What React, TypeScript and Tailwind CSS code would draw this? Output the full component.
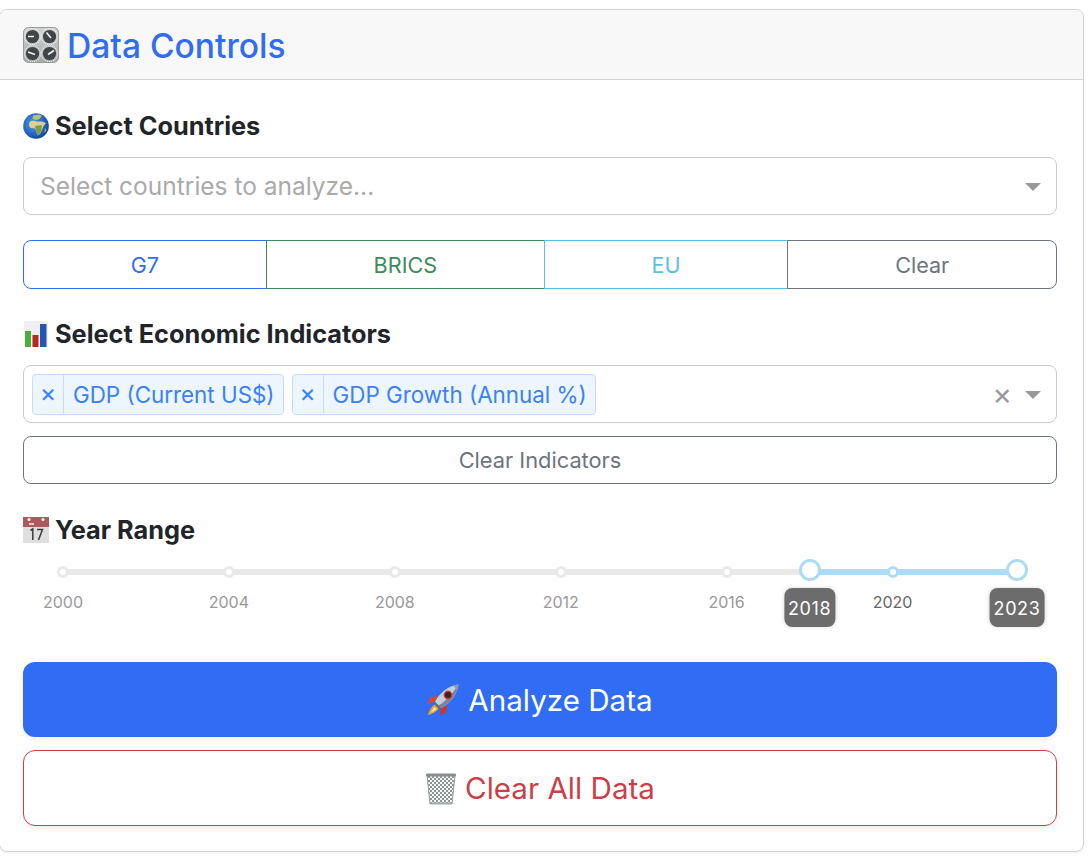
import React from "react";

const font = { fontFamily: "Inter, 'Liberation Sans', sans-serif" };

const KnobsIcon = () => (
  <svg viewBox="0 0 36 36" className="w-[36px] h-[36px] shrink-0">
    <defs>
      <linearGradient id="panel" x1="0" y1="0" x2="0" y2="1">
        <stop offset="0" stopColor="#d2d3d3" />
        <stop offset="1" stopColor="#a8aaaa" />
      </linearGradient>
    </defs>
    <rect x="0.5" y="0.5" width="35" height="35" rx="5" fill="url(#panel)" stroke="#9a9c9c" />
    {[
      [9.5, 9.5, 5, 9.5, 11, 9.5],
      [26.5, 9.5, 23.5, 5.5, 28, 11],
      [9.5, 26.5, 5, 25, 12, 27.5],
      [26.5, 26.5, 31, 23.5, 25, 27.5],
    ].map(([cx, cy, x1, y1, x2, y2], i) => (
      <g key={i}>
        <circle cx={cx} cy={cy} r="8" fill="none" stroke="#efefef" strokeWidth="1.2" strokeDasharray="1 1" />
        <circle cx={cx} cy={cy} r="6.6" fill="#41454a" />
        <line x1={x1} y1={y1} x2={x2} y2={y2} stroke="#f4f4f4" strokeWidth="1.6" />
      </g>
    ))}
  </svg>
);

const GlobeIcon = () => (
  <svg viewBox="0 0 26 26" className="w-[26px] h-[26px] shrink-0">
    <defs>
      <radialGradient id="sea" cx="0.4" cy="0.4" r="0.65">
        <stop offset="0" stopColor="#4f9de6" />
        <stop offset="0.7" stopColor="#1f62c0" />
        <stop offset="1" stopColor="#123f8e" />
      </radialGradient>
    </defs>
    <circle cx="13" cy="13" r="12.8" fill="url(#sea)" />
    <path d="M10 2.5 L16 1.5 L19 3 L16.5 6 L13 7 L9.5 6 Z" fill="#b7c07a" />
    <path d="M6.5 9 C8.5 7.5 11.5 7.5 13.5 8.5 L18.5 8.5 L23 10 L20.5 13 L19 17 L17 21 L14.5 22.5 L13 18 L12 15.5 L8 15 C6 14 5.5 11 6.5 9Z" fill="#ddcf8e" />
    <path d="M12 13 L19 12 L18.5 17 L16.5 21 L14.5 22.5 L13 18 Z" fill="#7d9c48" />
    <path d="M21.5 17 l1.6 -2 l0 3 l-1.4 2 Z" fill="#a9b56a" />
  </svg>
);

const ChartIcon = () => (
  <svg viewBox="0 0 26 26" className="w-[26px] h-[26px] shrink-0">
    <rect x="1" y="0" width="24" height="26" fill="#f0f0f0" />
    <rect x="2" y="10" width="6" height="16" fill="#4eae3c" />
    <rect x="9.5" y="14" width="6" height="12" fill="#b8281e" />
    <rect x="17" y="3" width="6.5" height="23" fill="#2456b4" />
  </svg>
);

const CalendarIcon = () => (
  <svg viewBox="0 0 26 26" className="w-[26px] h-[26px] shrink-0">
    <rect x="0" y="0" width="26" height="26" fill="#dfdfdf" />
    <rect x="0" y="0" width="26" height="10" fill="#ad5a5c" />
    <circle cx="6" cy="2.5" r="1.5" fill="#fff" />
    <circle cx="20" cy="2.5" r="1.5" fill="#fff" />
    <rect x="6" y="6" width="5" height="2" fill="#e8c9c9" />
    <path d="M7.5 13.5 L9.8 12 L9.8 23 M14 12.5 L19.5 12.5 L15.5 23" fill="none" stroke="#3b3b3b" strokeWidth="1.5" />
  </svg>
);

const RocketIcon = () => (
  <svg viewBox="0 0 32 32" className="w-[32px] h-[32px] shrink-0">
    <path d="M11 12 L4 13 L0.5 19 L8 18 Z" fill="#e8432a" />
    <path d="M20 21 L19 28 L13 31.5 L14 24 Z" fill="#d5351f" />
    <path d="M8 20 C4 23 2 27 1 31 C5 30 9 28 12 24 Z" fill="#f6a623" />
    <path d="M7.5 23 C6 25 5 27 4 28 C6 27.5 8 26.5 9.5 25 Z" fill="#fdeeb0" />
    <path d="M8 18 C12 9 21 2 31.5 0.5 C30 11 23 20 14 24 Z" fill="#c3cfdc" />
    <path d="M31.5 0.5 C30 11 23 20 14 24 L11.5 21.5 C19 17 26 9 31.5 0.5Z" fill="#75889f" />
    <path d="M8 18 L14 24 L12 25 L7 20 Z" fill="#5d6b7d" />
    <path d="M26 1.8 C27.8 1.2 29.6 0.8 31.5 0.5 C31.2 2.4 30.7 4.3 30.2 6 Z" fill="#8d9bad" />
    <circle cx="21" cy="11" r="4.4" fill="#d9352b" />
    <circle cx="21" cy="11" r="3" fill="#26292f" />
  </svg>
);

const TrashIcon = () => (
  <svg viewBox="0 0 32 32" className="w-[32px] h-[32px] shrink-0">
    <defs>
      <pattern id="mesh" width="4" height="4" patternUnits="userSpaceOnUse">
        <rect width="4" height="4" fill="#f4f5f5" />
        <path d="M0 0 L4 4 M4 0 L0 4" stroke="#8d9494" strokeWidth="1" />
      </pattern>
    </defs>
    <path d="M2 2 L30 2 L27 31 L5 31 Z" fill="url(#mesh)" />
    <path d="M2 2 L5 31 M30 2 L27 31" stroke="#9aa0a0" strokeWidth="1" />
    <rect x="1" y="0.5" width="30" height="3" rx="1" fill="#868e8e" />
    <rect x="5" y="29.5" width="22" height="2" fill="#a3a9a9" />
  </svg>
);

const Label = ({ icon, text }: { icon: React.ReactNode; text: string }) => (
  <div className="flex items-center gap-[6px] h-[30px] text-[25.3px] leading-[30px] font-bold text-[#212529]">
    {icon}
    <span>{text}</span>
  </div>
);

const Caret = () => <div className="mt-[2px] w-0 h-0 border-x-[8px] border-x-transparent border-t-[8px] border-t-[#999999]" />;

const Tag = ({ text }: { text: string }) => (
  <div className="flex h-[41px] items-stretch rounded-[4px] border border-[#c4dcfd] bg-[#edf5ff] text-[#3b82f6]">
    <span className="flex w-[31px] items-center justify-center border-r border-[#c4dcfd] text-[25px]">×</span>
    <span className="flex items-center pl-[9px] pr-[8px] pt-[1px] text-[22.4px]">{text}</span>
  </div>
);

const years = [
  { y: 2000, c: "text-[#999999]" },
  { y: 2004, c: "text-[#999999]" },
  { y: 2008, c: "text-[#999999]" },
  { y: 2012, c: "text-[#999999]" },
  { y: 2016, c: "text-[#999999]" },
  { y: 2020, c: "text-[#666666]" },
];
const pos = (y: number) => `${((y - 2000) / 23) * 100}%`;

const YearSlider = () => (
  <div className="relative mx-[40px] mt-[14px] h-[64px]">
    <div className="absolute left-0 right-0 top-[10px] h-[6px] bg-[#e9e9e9]" />
    <div className="absolute top-[10px] h-[6px] bg-[#abdcf7]" style={{ left: pos(2018), right: 0 }} />
    {years.map(({ y, c }) => {
      const active = y === 2020;
      return (
        <React.Fragment key={y}>
          <div
            className={`absolute top-[7px] h-[12px] w-[12px] -translate-x-1/2 rounded-full border-[3px] bg-white ${active ? "border-[#abdcf7]" : "border-[#e9e9e9]"}`}
            style={{ left: pos(y) }}
          />
          <span className={`absolute top-[32px] -translate-x-1/2 text-[16px] leading-[22px] ${c}`} style={{ left: pos(y) }}>
            {y}
          </span>
        </React.Fragment>
      );
    })}
    {[2018, 2023].map((y) => (
      <React.Fragment key={y}>
        <div
          className="absolute top-0 h-[22px] w-[22px] -translate-x-1/2 rounded-full border-[3px] border-[#abdcf7] bg-white"
          style={{ left: pos(y) }}
        />
        <div
          className="absolute top-[29px] flex h-[39px] -translate-x-1/2 items-center justify-center rounded-[8px] bg-[#6c6c6c] px-[4px] pt-[1px] text-[18px] text-white shadow-[0_0_4px_#d9d9d9]"
          style={{ left: pos(y) }}
        >
          <span className="tracking-[0.6px]">{y}</span>
        </div>
      </React.Fragment>
    ))}
  </div>
);

export default function App() {
  return (
    <div className="bg-white h-[856px] pt-[9px] overflow-hidden" style={font}>
      <div className="-ml-px w-[1085px] h-[843px] rounded-[8px] border border-[#d2d2d2] bg-white shadow-[0_1px_3px_rgba(0,0,0,0.06)] overflow-hidden">
        <div className="flex h-[70px] items-center gap-[8px] border-b border-[#d2d2d2] bg-[#f8f8f8] pl-[23px]">
          <KnobsIcon />
          <h3 className="pt-[2px] text-[33.6px] font-medium leading-[40px] text-[#316cf4]">Data Controls</h3>
        </div>

        <div className="pl-[23px] pr-[26px] pt-[31px]">
          <Label icon={<GlobeIcon />} text="Select Countries" />
          <div className="mt-[16px] flex h-[58px] items-center justify-between rounded-[8px] border border-[#cccccc] pl-[16px] pr-[15px] text-[24.5px] text-[#aaaaaa]">
            <span className="pt-[1px]">Select countries to analyze...</span>
            <Caret />
          </div>

          <div className="mt-[25px] flex h-[49px] text-[21.6px]">
            <button className="flex-auto rounded-l-[8px] border border-[#316cf4] pt-[1px] text-[#316cf4]">G7</button>
            <button className="-ml-px flex-auto border border-[#3f8a5c] pt-[1px] text-[#3f8a5c]">BRICS</button>
            <button className="-ml-px flex-auto border border-[#4fc3e8] pt-[1px] text-[#5bc0e6]">EU</button>
            <button className="-ml-px flex-auto rounded-r-[8px] border border-[#6c757d] pt-[1px] text-[#6c757d]">Clear</button>
          </div>

          <div className="mt-[30px]">
            <Label icon={<ChartIcon />} text="Select Economic Indicators" />
          </div>
          <div className="mt-[16px] flex h-[58px] items-center rounded-[8px] border border-[#cccccc] pl-[8px] pr-[15px]">
            <div className="flex gap-[8px]">
              <Tag text="GDP (Current US$)" />
              <Tag text="GDP Growth (Annual %)" />
            </div>
            <span className="ml-auto mr-[13px] text-[30px] leading-none text-[#999999]">×</span>
            <Caret />
          </div>

          <button className="mt-[13px] h-[48px] w-full rounded-[8px] border border-[#6c757d] text-[21.8px] text-[#6c757d]">
            Clear Indicators
          </button>

          <div className="mt-[31px]">
            <Label icon={<CalendarIcon />} text="Year Range" />
          </div>
          <YearSlider />

          <button className="mt-[39px] flex h-[75px] w-full items-center justify-center gap-[9px] rounded-[12px] bg-[#316cf4] pt-[1px] text-[29.6px] text-white shadow-[0_2px_6px_rgba(0,0,0,0.08)]">
            <RocketIcon />
            <span className="pt-[1px]">Analyze Data</span>
          </button>
          <button className="mt-[13px] flex h-[76px] w-full items-center justify-center gap-[8px] rounded-[12px] border border-[#cc3f49] pt-[1px] text-[29.6px] text-[#cc3f49] shadow-[0_2px_6px_rgba(0,0,0,0.08)]">
            <TrashIcon />
            Clear All Data
          </button>
        </div>
      </div>
    </div>
  );
}
